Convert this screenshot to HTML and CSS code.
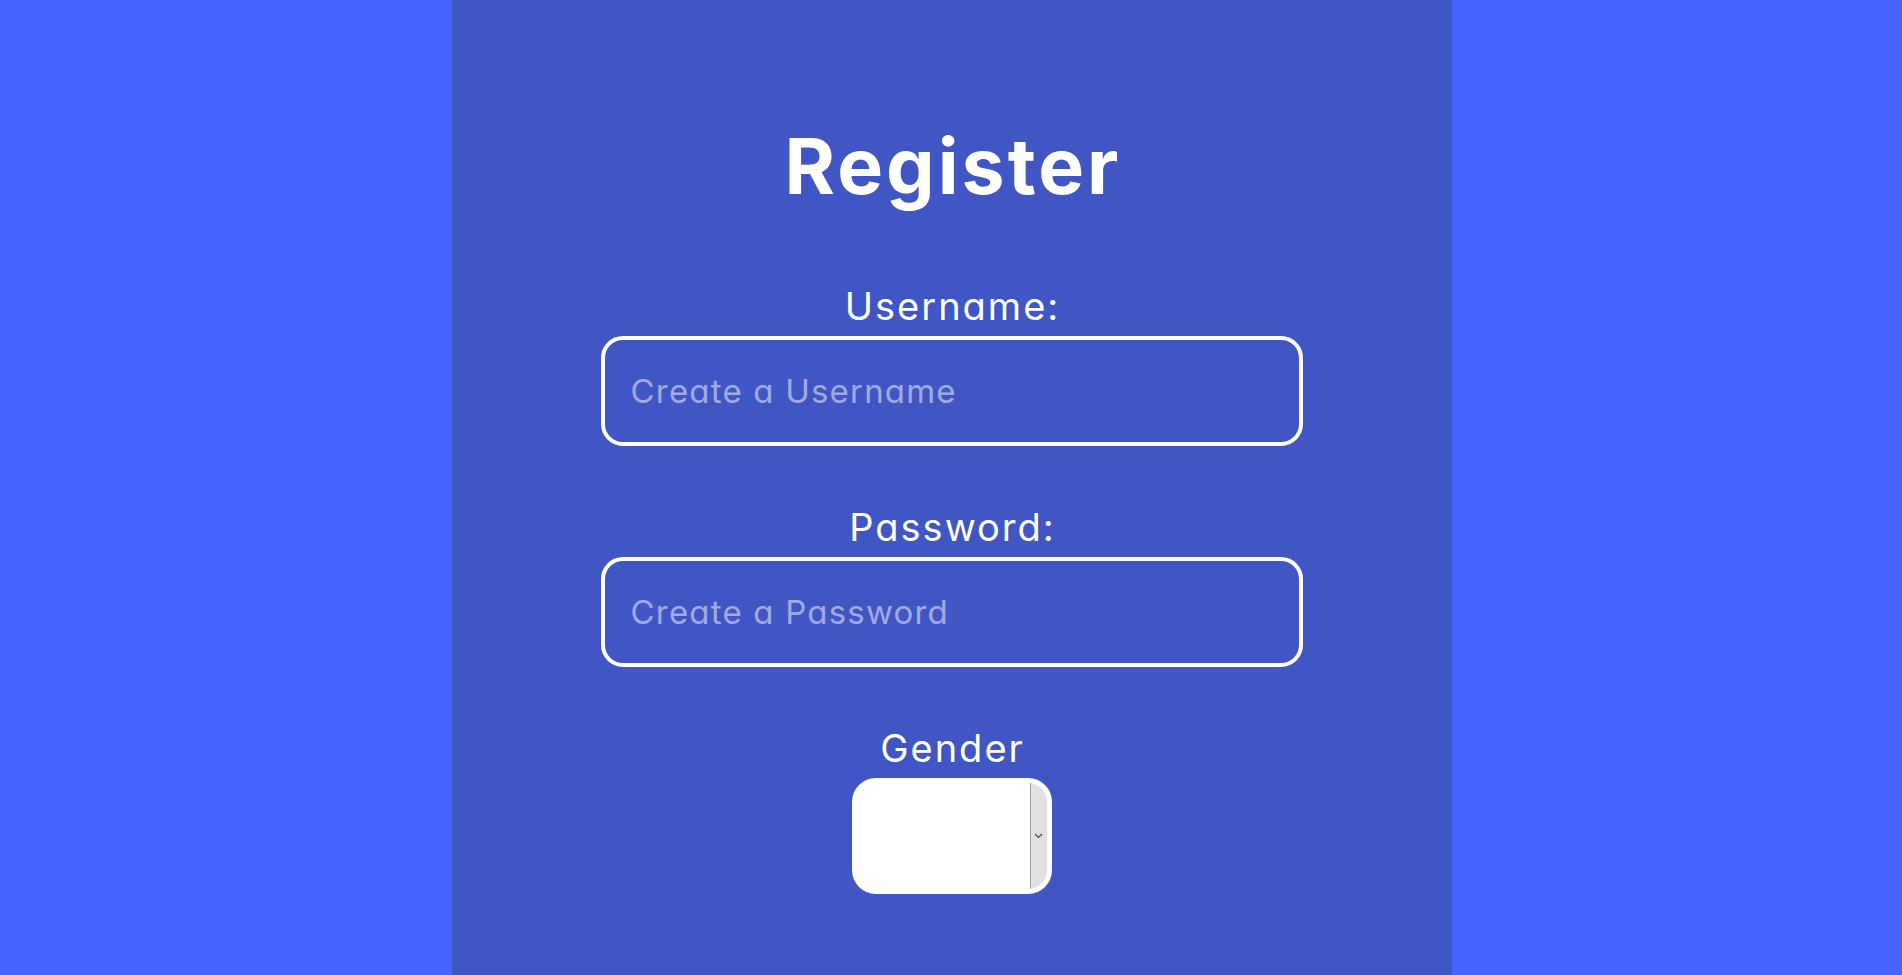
FILE: index.html
```html
<!DOCTYPE html>
<html lang="en">
<head>
<meta charset="utf-8">
<title>Register</title>
<link rel="stylesheet" href="styles.css">
</head>
<body>
<main class="panel">
  <h1 class="title">Register</h1>
  <form class="form">
    <div class="field">
      <label class="label" for="username">Username:</label>
      <input class="input" id="username" type="text" placeholder="Create a Username">
    </div>
    <div class="field">
      <label class="label" for="password">Password:</label>
      <input class="input" id="password" type="password" placeholder="Create a Password">
    </div>
    <div class="field">
      <label class="label" for="gender">Gender</label>
      <div class="select-wrap">
        <select class="select" id="gender"></select>
        <span class="select-btn" aria-hidden="true">
          <svg class="chevron" width="9" height="6" viewBox="0 0 9 6"><path d="M1 1 L4.5 4.5 L8 1" fill="none" stroke="#4a4a4a" stroke-width="1.1"/></svg>
        </span>
      </div>
    </div>
  </form>
</main>
</body>
</html>
```

FILE: styles.css
```css
html, body {
  margin: 0;
  padding: 0;
  height: 100%;
}

body {
  background: #4763ff;
  font-family: Inter, "Open Sans", "Liberation Sans", sans-serif;
  font-feature-settings: "cv11" 1;
  color: #ffffff;
  padding-left: 1px;
  box-sizing: border-box;
}

.panel {
  width: 1000px;
  min-height: 100%;
  margin: 0 auto;
  background: #4156c5;
  padding-top: 128px;
  box-sizing: border-box;
  display: flex;
  flex-direction: column;
  align-items: center;
}

.title {
  margin: 0 0 82px;
  padding-left: 3px;
  font-size: 77px;
  line-height: 77px;
  font-weight: 700;
  letter-spacing: 3px;
}

.form {
  display: flex;
  flex-direction: column;
  align-items: center;
  gap: 62px;
}

.field {
  display: flex;
  flex-direction: column;
  align-items: center;
  gap: 11px;
}

.label {
  padding-left: 2px;
  font-size: 38px;
  line-height: 38px;
  font-weight: 400;
  letter-spacing: 2px;
}

.input {
  box-sizing: border-box;
  width: 702px;
  height: 110px;
  border: 4px solid #ffffff;
  border-radius: 22px;
  background: transparent;
  padding: 0 26px;
  font-family: inherit;
  font-feature-settings: "cv11" 1;
  font-size: 33px;
  letter-spacing: 1.2px;
  color: #ffffff;
  outline: none;
}

.input::placeholder {
  color: rgba(255, 255, 255, 0.5);
}

.select-wrap {
  box-sizing: border-box;
  width: 200px;
  height: 116px;
  border: 5px solid #ffffff;
  border-radius: 24px;
  background: #ffffff;
  overflow: hidden;
  display: flex;
}

.select {
  flex: 1;
  min-width: 0;
  border: 0;
  margin: 0;
  padding: 0;
  background: #ffffff;
  appearance: none;
  -webkit-appearance: none;
  outline: none;
}

.select-btn {
  width: 16px;
  flex: none;
  background: #e1e1e1;
  border-left: 1px solid #a3a3a3;
  display: flex;
  align-items: center;
  justify-content: center;
}

.chevron {
  display: block;
}
```
